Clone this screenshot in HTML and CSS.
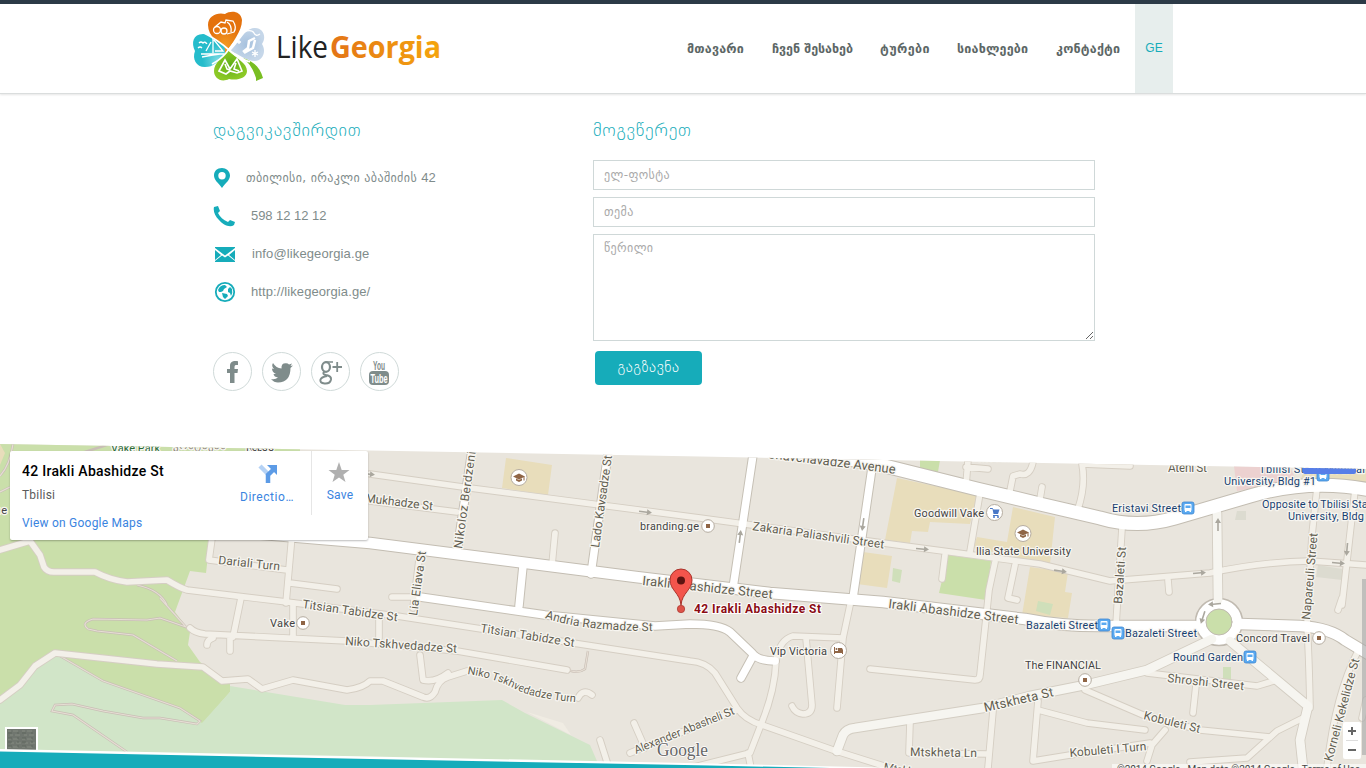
FILE: index.html
```html
<!DOCTYPE html>
<html lang="ka">
<head>
<meta charset="utf-8">
<title>Like Georgia</title>
<link rel="stylesheet" href="styles.css">
</head>
<body>
<header class="header">
  <div class="wrap bar">
    <a class="logo">
      <svg width="260" height="80" viewBox="190 8 260 80">
        <defs>
          <linearGradient id="word" x1="0" x2="1" y1="0" y2="0"><stop offset="0" stop-color="#e37417"/><stop offset="1" stop-color="#f5a50c"/></linearGradient>
          <radialGradient id="or" cx=".5" cy=".8"><stop offset="0" stop-color="#f39a22"/><stop offset="1" stop-color="#e4720d"/></radialGradient>
          <radialGradient id="bl" cx=".8" cy=".8"><stop offset="0" stop-color="#7fdbe4"/><stop offset="1" stop-color="#25bccb"/></radialGradient>
          <radialGradient id="gy"><stop offset="0" stop-color="#a6c1de"/><stop offset="1" stop-color="#c6d7e9"/></radialGradient>
          <radialGradient id="gr"><stop offset="0" stop-color="#5fae18"/><stop offset="1" stop-color="#8cc926"/></radialGradient>
        </defs>
        <path fill="url(#or)" d="M226 54C219 43 208 36 208 25C208 16 217 12 225 14C231 10 241 11 242 20C242 32 232 42 226 54Z"/>
        <path fill="url(#bl)" d="M224 56C217 62 214 67 205 67C196 67 192 59 195 51C191 43 193 34 203 34C212 34 217 42 224 46Q226 51 224 56Z"/>
        <path fill="url(#gy)" d="M230 51C239 43 244 29 254 28C263 27 267 37 262 44C267 52 262 61 255 61C246 61 239 54 230 51Z"/>
        <path fill="url(#gr)" d="M228 50C237 59 247 63 247 71C247 78 237 81 229 79C221 83 214 78 214 71C214 63 222 58 228 50Z"/>
        <path fill="#79be22" d="M243 58C255 62 260 68 263 78L256 81V78C253 69 250 64 243 58Z"/>
        <path fill="none" stroke="#fff" stroke-width="1.800" d="M204 33Q218 40 229 50Q238 58 250 62M243 32Q232 45 226 53Q220 60 212 64"/>
        <g fill="none" stroke="#fff" stroke-width="1.300">
          <circle cx="217" cy="30" r="3.500"/><circle cx="224" cy="31" r="3"/>
          <path d="M215 27l6-5l4 1l1-3l7 1q4 6 1 11l-7 2M227 22q5 3 4 10"/>
          <path d="M199 43q2-2 4 0q2-2 4 1M198 48q2-2 4 0M201 54h23M202 57q10-2 18-3M213 38v15M214 40l9 11h-8M211 42l-5 9"/>
          <path stroke-width="2.500" d="M255 38l-6 3l-1 7l-5 4M255 40l-2 8l-9 5"/>
          <path d="M243 32q9-3 11 1t6 1M255 50v7M252 52l6 3M258 52l-6 3M239 40v4M237 42h4"/>
          <path stroke-width="1.600" d="M219 71l6-11l5 9l7-10l5 12l-5 2l-7-2l-4 3zM225 64l2 5l3 1M236 63l-2 6l5 2"/>
        </g>
        <g class="wordmark">
          <text x="276" y="58" textLength="52" lengthAdjust="spacingAndGlyphs" fill="#222">Like</text>
          <text x="330" y="58" textLength="111" lengthAdjust="spacingAndGlyphs" fill="url(#word)" font-weight="700">Georgia</text>
        </g>
      </svg>
    </a>
    <nav class="nav">
      <a class="n1">მთავარი</a><a class="n2">ჩვენ შესახებ</a><a class="n3">ტურები</a><a class="n4">სიახლეები</a><a class="n5">კონტაქტი</a>
    </nav>
    <a class="lang">GE</a>
  </div>
</header>
<main class="wrap contact">
  <section class="info">
    <h2>დაგვიკავშირდით</h2>
    <ul class="list">
      <li><svg width="18" height="22" viewBox="0 0 18 22"><path fill="#16acba" fill-rule="evenodd" d="M9 1C4 1 1 4 1 8.500C1 13 5 15.500 9 21C13 15.500 17 13 17 8.500C17 4 13 1 9 1ZM9 5A3.700 3.700 0 1 1 9 12.400A3.700 3.700 0 1 1 9 5Z"/></svg><span class="addr">თბილისი, ირაკლი აბაშიძის <b>42</b></span></li>
      <li><svg width="23" height="22" viewBox="0 0 23 22"><path fill="#16acba" d="M1 2L5 1L7 6L5 8C7 12 10 15 15 17L17 15L22 17L21 20C17 23 10 20 6 15C2 11 0 6 1 2Z"/></svg><span class="phone">598 12 12 12</span></li>
      <li><svg width="24" height="22" viewBox="0 0 24 22"><path fill="#16acba" d="M2 4H22V5L12 12.500L2 5ZM2 7L8 12L2 17ZM22 7L16 12L22 17ZM2 19V18L9 12.500L12 14.500L15 12.500L22 18V19H2Z"/></svg><span class="mail">info@likegeorgia.ge</span></li>
      <li><svg width="24" height="22" viewBox="0 0 24 22"><circle cx="12" cy="11" r="9.200" fill="none" stroke="#16acba" stroke-width="1.800"/><path fill="#16acba" d="M5 9Q7 4 12 4L14 6L11 8L10 10L8 11L6 11ZM9 12L14 13L15 15L12 18L10 16ZM17 6L19 8Q20 12 18 15L17 12L15 11L15 8Z"/></svg><span class="url">http://likegeorgia.ge/</span></li>
    </ul>
    <div class="social">
      <a><svg width="37" height="37"><path fill="#7f8c8b" d="M16 30V20H13V16H16V13C16 9 18.500 7.500 24 8.200V12H22C20.500 12 20.500 13 20.500 16H24L23.500 20H20.500V30Z"/></svg></a>
      <a><svg width="37" height="37"><path fill="#7f8c8b" d="M8 25Q12 26 15 23.500Q11 23 10.500 20H13Q9 18 9 14.500L11 15Q8 12 10 9Q13 14 18.500 14.500Q18 9 23 9.200Q25 9.200 26 10.500L29 9.500L27.500 12L30 11.500L27.500 14Q27.500 28 15 28.500Q11 28.500 8 25Z" transform="translate(0 1)"/></svg></a>
      <a><svg width="37" height="37"><g fill="none" stroke="#7f8c8b"><ellipse cx="14" cy="14" rx="4" ry="4.800" stroke-width="2.200"/><path stroke-width="1.500" d="M13.500 9H21"/><path stroke-width="2" d="M12.500 18.500Q9.500 21 14 22Q19.500 23 19 26.500Q18 31 12.500 30.500Q7.500 30 8.500 26.500Q9.500 24 15 23"/><path stroke-width="1.800" d="M20.500 14H30M25.200 9V19"/></g></svg></a>
      <a><svg width="37" height="37"><rect x="8" y="18" width="20" height="14" rx="4" fill="#7f8c8b"/><g class="yt"><text x="12" y="16.500" textLength="12" lengthAdjust="spacingAndGlyphs" fill="#7f8c8b">You</text><text x="9.500" y="30" textLength="17" lengthAdjust="spacingAndGlyphs" fill="#fff">Tube</text></g></svg></a>
    </div>
  </section>
  <section class="write">
    <h2>მოგვწერეთ</h2>
    <form>
      <input type="text" placeholder="ელ-ფოსტა">
      <input type="text" placeholder="თემა">
      <textarea placeholder="წერილი"></textarea>
      <button type="button">გაგზავნა</button>
    </form>
  </section>
</main>
<section class="map">
<svg class="canvas" width="1366" height="325" viewBox="0 443 1366 325">
  <defs>
    <clipPath id="slant"><path d="M0 444L370 450.500L700 456.500L1366 469V768H0Z"/></clipPath>
    <g id="bus"><rect x="-6" y="-6" width="12" height="12" rx="2" fill="#5aa9f0" stroke="#3d87d0" stroke-width=".8"/><rect x="-3.500" y="-4" width="7" height="7" rx="1" fill="#fff"/><path fill="#5aa9f0" d="M-2.500-2.500h5v2.500h-5z"/><path stroke="#fff" d="M-3 3.500h1.500M1.500 3.500h1.500"/></g>
    <g id="dot"><circle r="6.300" fill="#fff" stroke="#b5aca0"/><rect x="-2" y="-2" width="4" height="4" fill="#8f6546"/></g>
    <g id="school"><circle r="8" fill="#fff" stroke="#b5aca0"/><path fill="#8f6546" d="M-6-1L0-4L6-1L0 2ZM-3 1L0 2.500L3 1V3L0 4.500L-3 3Z"/><path stroke="#8f6546" d="M5-1V3"/></g>
    <path id="arr" fill="#aaa79e" d="M-6-.8H2V-3L7 0L2 3V.8H-6Z"/>
    <g id="minor">
      <path d="M0 550L30 541L40 555L44 567Q47 572 54 572H95Q110 580 127 582L167 580Q180 588 187 590L287 602L397 616L560 641L690 661Q706 662 715 673L737 708Q745 720 762 725L833 750L887 767"/>
      <path d="M370 474L470 488L700 518L883 543L1040 564L1110 581L1210 573Q1260 562 1310 561L1366 565"/>
      <path d="M212 538L209 560L287 570M292 535L286 603M290 583L337 589M241 598L233 637M293 603V638M190 628Q195 633 205 634L347 641L457 651L567 670M230 638V651M213 638Q207 640 207 645"/>
      <path d="M370 501L457 512M555 533L552 565M420 552L413 608M420 597H392M379 615V638"/>
      <path d="M0 700L20 685L35 666L55 653L157 664L203 667L222 681L248 679L262 689L293 680L347 690Q363 688 370 681H383L423 697Q430 700 435 692Q438 680 448 677L467 671"/>
      <path d="M420 655L423 680Q435 683 448 673M578 698Q583 688 592 695M600 740L607 762M634 723L645 748M630 753L737 710M850 605L843 638L837 708M843 638L793 636Q779 640 776 661Q775 690 762 722L750 753L690 768M748 753L751 768M806 638L812 705Q812 714 803 714Q795 713 792 706"/>
      <path d="M870 669L975 680Q980 680 980 675L989 590L995 562M910 722L909 753L988 754M993 711L988 768M1038 701L1033 761L1070 755L1150 743M1038 710L1087 723L1145 730M1085 690L1143 715L1200 730L1270 737M1147 761L1152 745L1165 730M1190 762L1247 758L1277 731L1303 718M1147 673L1257 686L1277 680M1196 685L1193 713"/>
      <path d="M1317 488L1312 535L1307 625Q1309 655 1310 708M1355 490L1342 605M1122 528L1116 625M1168 580L1169 592M1130 466L1082 464Q1086 485 1078 509M1042 487L1040 499M980 493L970 552M968 460L966 485M966 467L988 469M1033 462Q1030 477 1020 474L1013 476L1010 491M945 555L942 579M1015 565L1008 598L1017 600M1342 598L1338 610M1358 651Q1335 695 1327 768M1366 700L1362 718"/>
    </g>
    <g id="mid"><path d="M837 751L843 735Q846 729 855 728L983 708L1030 696L1085 685L1147 670L1212 639M1230 641L1308 706L1300 740L1303 768M1217 513L1218 600"/></g>
    <g id="lanes"><path d="M753 455L733 588M872 468L853 598M472 450L457 552M608 453L591 574M523 566L519 606M420 597L545 615L655 626L690 624Q720 624 730 632L752 653Q758 661 775 661M753 656L741 678"/></g>
    <g id="major"><path d="M250 533L370 543L636 577L770 593L883 602L1025 619Q1060 626 1100 626H1195M1240 624L1300 626Q1330 628 1345 640L1370 655"/></g>
  </defs>
  <g clip-path="url(#slant)">
    <path fill="#e9e5dd" d="M0 443H1366V768H0Z"/>
    <path fill="#cadfaa" d="M0 443H300V520L210 538L206 573L190 571L175 612L190 632L188 645L200 662L230 684V692L204 722L150 760H0Z"/>
    <path fill="#d1e5c8" d="M0 700L20 685L35 666L55 653L103 681L178 708L202 723L230 692V686L345 705H370L502 700L525 713L590 745L600 768H0Z"/>
    <path fill="#f0ece3" d="M527 712L563 723L571 735Z"/>
    <g fill="#e8ddbb"><path d="M0 444L5 453L0 465ZM506 458L552 465L548 495L502 488ZM897 478L977 495L970 524L930 522L928 532L912 531L910 543L885 540ZM1013 507L1055 517L1050 564L973 548L977 537L1007 542ZM863 552L892 556L887 588L857 584ZM1030 567L1068 572L1065 592L1072 593L1068 618L1022 615ZM1305 467H1366V487L1300 482Z"/></g>
    <path fill="#ecd1d0" d="M1234 466L1290 467L1296 480L1237 491Z"/>
    <path fill="#cadfaa" d="M948 555L991 561L986 600L939 593ZM920 460H940L938 472L920 468Z"/>
    <path fill="#cfdfba" d="M893 568L902 570L900 583L892 581ZM1223 667H1231V680H1223ZM1038 601L1053 604L1050 615L1036 611Z"/>
    <path fill="#dcdbd0" d="M1237 511H1246V520H1235ZM1318 565L1342 569V580L1316 577Z"/>
    <path fill="none" stroke="#c8beb5" stroke-width="2.400" d="M13 444Q10 465 0 476M0 492L10 487M75 455L110 444M137 585Q160 590 167 605M160 598L186 627L160 618L147 620L93 619Q80 623 88 629L97 631L133 635L177 661M60 656L103 681L180 708L200 721L197 724L160 718L143 718L103 711L72 704L55 705L52 711L73 715L127 752M588 651L585 669Q578 674 568 670"/>
    <path fill="none" stroke="#e6ded4" stroke-width="1.200" d="M13 444Q10 465 0 476M0 492L10 487M137 585Q160 590 167 605M160 598L186 627L160 618L147 620L93 619Q80 623 88 629L97 631L133 635L177 661M60 656L103 681L180 708L200 721L197 724L160 718L143 718L103 711L72 704L55 705L52 711L73 715L127 752M588 651L585 669Q578 674 568 670"/>
    <g class="road">
      <use href="#minor" stroke="#d5cec3" stroke-width="7.500"/>
      <use href="#mid" stroke="#d3cdc2" stroke-width="10.500"/>
      <use href="#lanes" stroke="#c6c0b5" stroke-width="9.500"/>
      <use href="#major" stroke="#c3bdb2" stroke-width="12.500"/>
      <path d="M740 440L877 464L977 489L1040 504L1100 518Q1137 529 1175 518L1250 496Q1310 478 1370 490" stroke="#c3bdb2" stroke-width="15"/>
      <circle cx="1219" cy="622" r="23.500" fill="#fff" stroke="#c0bab0" stroke-width="1.500"/>
      <use href="#minor" stroke="#f3f0e9" stroke-width="5.700"/>
      <use href="#mid" stroke="#f6f5f0" stroke-width="8.700"/>
      <use href="#lanes" stroke="#fff" stroke-width="7.500"/>
      <use href="#major" stroke="#fff" stroke-width="10.500"/>
      <path d="M740 440L877 464L977 489L1040 504L1100 518Q1137 529 1175 518L1250 496Q1310 478 1370 490" stroke="#fff" stroke-width="13"/>
      <circle cx="1219" cy="622" r="13" fill="#cadfaa" stroke="#c0bab0"/>
    </g>
    <use href="#arr" transform="translate(368 474) rotate(7)"/><use href="#arr" transform="translate(645 512) rotate(7)"/><use href="#arr" transform="translate(922 549) rotate(5)"/><use href="#arr" transform="translate(1060 571) rotate(8)"/><use href="#arr" transform="translate(1199 573) rotate(-5)"/><use href="#arr" transform="translate(1338 563) rotate(5)"/><use href="#arr" transform="translate(740 537) rotate(-83)"/><use href="#arr" transform="translate(863 524) rotate(98)"/><use href="#arr" transform="translate(1218 525) rotate(-90)"/><use href="#arr" transform="translate(1347 549) rotate(95)"/><use href="#arr" transform="translate(1215 604) rotate(175)"/><use href="#arr" transform="translate(1203 617) rotate(108)"/>
    <g class="labels">
      <text x="111" y="452" textLength="49" fill="#276b35">Vake Park</text>
      <text x="173" y="449" textLength="53" fill="#8b8577">კოსტავას</text>
      <text x="246" y="451" textLength="28">Kobs s</text>
      <text x="-6" y="514" textLength="13">ke</text>
      <g class="street">
        <text transform="translate(218 564) rotate(6)" textLength="62">Dariali Turn</text>
        <text transform="translate(365 502) rotate(7)" textLength="68">Mukhadze St</text>
        <text transform="translate(462 549) rotate(-82)" textLength="98">Nikoloz Berdzeni</text>
        <text transform="translate(599 548) rotate(-82)" textLength="93">Lado Kavsadze St</text>
        <text transform="translate(417 616) rotate(-82)" textLength="65">Lia Eliava St</text>
        <text transform="translate(302 608) rotate(8)" textLength="96">Titsian Tabidze St</text>
        <text transform="translate(345 645) rotate(4)" textLength="112">Niko Tskhvedadze St</text>
        <text transform="translate(480 632) rotate(9)" textLength="95">Titsian Tabidze St</text>
        <path id="curve1" fill="none" d="M545 618Q580 631 655 631"/><text><textPath href="#curve1" textLength="109">Andria Razmadze St</textPath></text>
        <path id="curve2" fill="none" d="M467 674Q495 678 515 689T590 703"/><text font-size="11"><textPath href="#curve2" textLength="113">Niko Tskhvedadze Turn</textPath></text>
        <text transform="translate(636 754) rotate(-22)" textLength="107" font-size="11.500">Alexander Abasheli St</text>
        <text transform="translate(752 530) rotate(8)" textLength="133">Zakaria Paliashvili Street</text>
        <text transform="translate(767 458) rotate(7)" textLength="129" font-size="13">Chavchavadze Avenue</text>
        <text transform="translate(642 585) rotate(6)" textLength="131" font-size="13">Irakli Abashidze Street</text>
        <text transform="translate(888 608) rotate(7)" textLength="131" font-size="13">Irakli Abashidze Street</text>
        <text transform="translate(985 712) rotate(-13)" textLength="71" font-size="13">Mtskheta St</text>
        <text transform="translate(910 756) rotate(1)" textLength="67">Mtskheta Ln</text>
        <text transform="translate(883 771) rotate(10)" textLength="60">Mtskheta Ln</text>
        <text transform="translate(1122 604) rotate(-86)" textLength="57">Bazaleti St</text>
        <text transform="translate(1310 620) rotate(-85)" textLength="87">Napareuli Street</text>
        <text transform="translate(1332 762) rotate(-75)" textLength="106">Korneli Kekelidze St</text>
        <text transform="translate(1167 682) rotate(6)" textLength="77">Shroshi Street</text>
        <text transform="translate(1143 719) rotate(14)" textLength="58">Kobuleti St</text>
        <text transform="translate(1070 757) rotate(-5)" textLength="77">Kobuleti I Turn</text>
        <text x="1168" y="472" textLength="39">Ateni St</text>
        <text x="978" y="461" textLength="80">Mosashvili Street</text>
      </g>
      <text x="640" y="530" textLength="59">branding.ge</text>
      <text x="914" y="517" textLength="70">Goodwill Vake</text>
      <text x="976" y="555" textLength="95">Ilia State University</text>
      <text x="270" y="627" textLength="25">Vake</text>
      <text x="770" y="655" textLength="57">Vip Victoria</text>
      <text x="1025" y="669" textLength="76">The FINANCIAL</text>
      <text x="1236" y="642" textLength="74">Concord Travel</text>
      <g fill="#173f70">
        <text x="1112" y="512" textLength="69">Eristavi Street</text><text x="1026" y="629" textLength="72">Bazaleti Street</text><text x="1125" y="637" textLength="72">Bazaleti Street</text><text x="1173" y="661" textLength="70">Round Garden</text>
        <text x="1259" y="473" textLength="106">Tbilisi State Medical</text><text x="1224" y="485" textLength="92">University, Bldg #1</text><text x="1262" y="508" textLength="115">Opposite to Tbilisi State</text><text x="1288" y="520" textLength="92">University, Bldg #1</text>
      </g>
    </g>
    <use href="#school" x="519" y="477.500"/><use href="#school" x="1023" y="533.500"/><use href="#dot" x="708" y="526"/><use href="#dot" x="303" y="623"/><use href="#dot" x="1085" y="680"/><use href="#dot" x="1319" y="638"/>
    <circle cx="994.500" cy="512.500" r="8" fill="#fff" stroke="#b5aca0"/><path fill="#4877c7" d="M990 508h2.500l1 1.500h6l-1.500 4.500h-4.500l-1-5h-2.500zM993 515h5.500v1h-5.500z"/><circle cx="994" cy="517" r="1" fill="#4877c7"/><circle cx="998" cy="517" r="1" fill="#4877c7"/>
    <circle cx="838.500" cy="650.500" r="8" fill="#fff" stroke="#b5aca0"/><path fill="#8f6546" d="M834 647h1v4h8v3h-1v-1h-7v1h-1zM838 648h4l1 2v1h-5z"/><circle cx="836.500" cy="649" r="1" fill="#8f6546"/>
    <use href="#bus" x="1188" y="508"/><use href="#bus" x="1104" y="625"/><use href="#bus" x="1118" y="633"/><use href="#bus" x="1250" y="657"/><use href="#bus" x="1323" y="475"/>
    <path fill="#577ee8" d="M1303 468H1356V472Q1356 474 1354 474H1305Q1303 474 1303 472Z"/>
    <circle cx="681" cy="609" r="3.700" fill="#dd5349" stroke="#a9332b" stroke-width=".7"/>
    <path fill="#f3554c" stroke="#a9332b" d="M681 605C680 593 670 590 670 580A11 11 0 0 1 692 580C692 590 682 593 681 605Z"/><circle cx="681" cy="580.500" r="4" fill="#5c1411"/>
    <text class="place" x="694" y="613" textLength="127">42 Irakli Abashidze St</text>
    <text class="google" x="657" y="756" textLength="51" lengthAdjust="spacingAndGlyphs">Google</text>
    <path fill="#aaa" opacity=".65" d="M1362 579H1366V755H1362Z"/>
    <path fill="#fff" opacity=".6" d="M1112 764H1366V768H1112Z"/>
    <text class="terms" x="1117" y="773" textLength="243">©2014 Google · Map data ©2014 Google · Terms of Use</text>
    <rect x="1343" y="722" width="18" height="37" rx="2" fill="#fff"/><path stroke="#666" stroke-width="2" d="M1348 731h8M1352 727v8M1348 750h8"/><path stroke="#ddd" d="M1346 740.500h12"/>
    <rect x="6" y="728" width="31" height="30" fill="#70766f" stroke="#fff" stroke-width="2"/><path stroke="#858b82" stroke-width="1" stroke-dasharray="3 2 5 4" d="M8 731h27M10 735h25M8 739h27M11 743h24M8 747h26"/><path stroke="#5f675e" stroke-width="1" stroke-dasharray="4 5 2 3" d="M8 733h27M8 738h27M8 742h27M8 746h27"/>
  </g>
  <path fill="#fff" d="M0 749L370 756.500L710 763.500L900 768H0Z"/>
  <path fill="#16acba" d="M0 751.500L370 759L710 765.500L830 768H0Z"/>
</svg>
<aside class="card">
  <div class="place-info"><strong>42 Irakli Abashidze St</strong><span>Tbilisi</span><a>View on Google Maps</a></div>
  <div class="act dir"><svg width="20" height="20"><path d="M2 2L10 10" stroke="#b5d2f5" stroke-width="4.500"/><path d="M10 19V11L15 6" fill="none" stroke="#5c9be6" stroke-width="4.500"/><path fill="#5c9be6" d="M9 1H19V11Z"/></svg><a>Directio…</a></div>
  <div class="act save"><svg width="22" height="22"><path fill="#b0b0b0" d="M11 0L13.700 8H21.500L15.300 12.700L17.500 20L11 15.500L4.500 20L6.700 12.700L.5 8H8.300Z"/></svg><a>Save</a></div>
</aside>
</section>
</body>
</html>
```
FILE: styles.css
```css
* { box-sizing: border-box; }
body { margin: 0; width: 1366px; height: 768px; overflow: hidden; background: #fff; font-family: "Liberation Sans", "DejaVu Sans", sans-serif; color: #7f8c8b; }
.wrap { width: 980px; margin: 0 auto; }
.header { height: 94px; border-top: 4px solid #2c3a47; border-bottom: 1px solid #dadddd; box-shadow: 0 1px 2px #e6e6e6; }
.bar { display: flex; height: 89px; }
.logo { margin-left: -3px; padding-top: 4px; width: 497px; }
.wordmark { font: 31px "Open Sans", sans-serif; }
.nav { display: flex; width: 448px; gap: 27px; font: bold 12.5px/90px "DejaVu Sans", sans-serif; letter-spacing: .2px; color: #5d6766; white-space: nowrap; }
.n1 { width: 58px; }
.n2 { width: 81px; letter-spacing: -.05px; }
.n3 { width: 50px; letter-spacing: .4px; }
.n4 { width: 72px; }
.n5 { width: 66px; letter-spacing: .2px; }
.lang { width: 38px; background: #e7eeed; color: #16acba; font-size: 12px; line-height: 89px; text-align: center; }
.contact { display: flex; height: 349px; padding: 25px 0 0 20px; }
.info { width: 380px; }
h2 { margin: 0; height: 41px; font: 300 18px/22px "DejaVu Sans", sans-serif; letter-spacing: .7px; color: #16acba; }
.write h2 { letter-spacing: .7px; }
.list { margin: -1px 0 0; padding: 0; list-style: none; }
.list li { display: flex; align-items: center; height: 38px; font-size: 13px; }
.list span { position: relative; top: -1px; }
.list .addr { margin-left: 15px; top: 0; font: 12px/16px "DejaVu Sans", sans-serif; letter-spacing: .4px; }
.addr b { font: 13px "Liberation Sans", sans-serif; letter-spacing: 0; }
.phone { margin-left: 15px; letter-spacing: -.05px; }
.mail { margin-left: 15px; letter-spacing: .12px; }
.url { margin-left: 14px; letter-spacing: .1px; }
.social { display: flex; gap: 10px; margin-top: 41px; }
.social a { width: 39px; height: 39px; border: 1px solid #d0dad9; border-radius: 50%; }
.social svg { display: block; }
.yt { font: bold 12px "Liberation Sans", sans-serif; }
form { display: flex; flex-direction: column; align-items: flex-start; gap: 7px; }
input, textarea { width: 502px; height: 30px; margin: 0; padding: 0 10px; border: 1px solid #cfd8d8; font: 12px "DejaVu Sans", sans-serif; letter-spacing: .4px; background: #fff; }
textarea { height: 107px; padding-top: 6px; }
::placeholder { color: #aaa; }
button { width: 107px; height: 34px; margin: 3px 0 0 2px; padding: 0 0 2px; border: 0; border-radius: 4px; background: #16acba; color: #fff; font: 300 15px "DejaVu Sans", sans-serif; letter-spacing: .5px; }
.map { position: relative; height: 325px; }
.canvas { display: block; }
.road { fill: none; stroke-linecap: round; stroke-linejoin: round; }
.labels { font: 11px Roboto, sans-serif; fill: #434343; stroke: #f7f5f0; stroke-width: 2.5px; stroke-linejoin: round; }
.labels text { paint-order: stroke; }
.labels path { stroke: none; }
.street { fill: #625e50; font-size: 12px; }
.place { font: bold 12px Roboto, sans-serif; fill: #8b0c14; stroke: #fff; stroke-width: 2px; paint-order: stroke; }
.google { font: 19px "Liberation Serif", serif; fill: #666; stroke: #fff; stroke-width: 1.5px; paint-order: stroke; }
.terms { font: 10px Roboto, sans-serif; fill: #444; }
.card { position: absolute; left: 10px; top: 8px; width: 358px; height: 89px; display: flex; background: #fff; border-radius: 2px; box-shadow: 0 1px 2px #0004; font: 12px Roboto, sans-serif; }
.card a { color: #3a84df; letter-spacing: .22px; }
.place-info { width: 216px; padding: 12px; display: flex; flex-direction: column; }
.place-info strong { font-size: 14px; font-weight: 500; line-height: 17px; letter-spacing: .28px; color: #000; }
.place-info span { line-height: 14px; margin: 8px 0 14px; color: #5b5b5b; letter-spacing: .2px; }
.place-info a { line-height: 14px; }
.act { display: flex; flex-direction: column; align-items: center; text-align: center; }
.dir { width: 86px; height: 64px; padding-top: 13px; border-right: 1px solid #e6e6e6; }
.dir svg { margin-right: 2px; }
.card .dir a { margin: 6px 3px 0 0; letter-spacing: .55px; }
.save { width: 56px; padding-top: 11px; }
.save svg { margin-right: 2px; }
.save a { margin-top: 4px; }
```
